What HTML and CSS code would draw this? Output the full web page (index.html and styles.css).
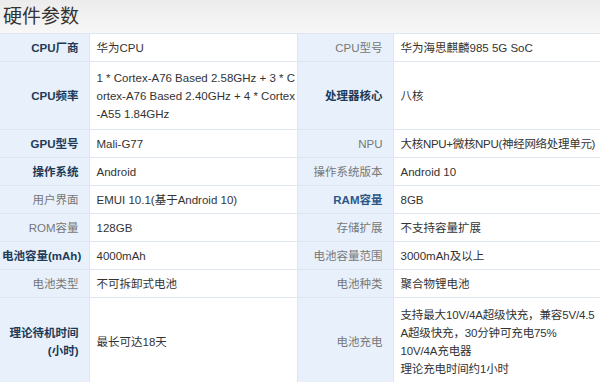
FILE: index.html
```html
<!DOCTYPE html>
<html lang="zh">
<head>
<meta charset="utf-8">
<link rel="stylesheet" href="styles.css">
</head>
<body>
<div class="page">
  <div class="head"><h1 class="title">硬件参数</h1></div>
  <table class="spec">
    <colgroup><col class="c1"><col class="c2"><col class="c3"><col class="c4"></colgroup>
    <tr class="row">
      <th class="lab strong">CPU厂商</th><td class="val">华为CPU</td>
      <th class="lab">CPU型号</th><td class="val">华为海思麒麟985 5G SoC</td>
    </tr>
    <tr class="row tall">
      <th class="lab strong">CPU频率</th><td class="val lines">1 * Cortex-A76 Based 2.58GHz + 3 * C<br>ortex-A76 Based 2.40GHz + 4 * Cortex<br>-A55 1.84GHz</td>
      <th class="lab strong">处理器核心</th><td class="val">八核</td>
    </tr>
    <tr class="row">
      <th class="lab strong">GPU型号</th><td class="val">Mali-G77</td>
      <th class="lab">NPU</th><td class="val lines tight">大核NPU+微核NPU(神经网络处理单元)</td>
    </tr>
    <tr class="row">
      <th class="lab strong">操作系统</th><td class="val">Android</td>
      <th class="lab">操作系统版本</th><td class="val">Android 10</td>
    </tr>
    <tr class="row">
      <th class="lab">用户界面</th><td class="val">EMUI 10.1(基于Android 10)</td>
      <th class="lab strong blue">RAM容量</th><td class="val">8GB</td>
    </tr>
    <tr class="row">
      <th class="lab">ROM容量</th><td class="val">128GB</td>
      <th class="lab">存储扩展</th><td class="val">不支持容量扩展</td>
    </tr>
    <tr class="row">
      <th class="lab strong">电池容量(mAh)</th><td class="val">4000mAh</td>
      <th class="lab">电池容量范围</th><td class="val">3000mAh及以上</td>
    </tr>
    <tr class="row">
      <th class="lab">电池类型</th><td class="val">不可拆卸式电池</td>
      <th class="lab">电池种类</th><td class="val">聚合物锂电池</td>
    </tr>
    <tr class="row last">
      <th class="lab strong">理论待机时间<br>(小时)</th><td class="val">最长可达18天</td>
      <th class="lab">电池充电</th><td class="val lines slight">支持最大10V/4A超级快充，兼容5V/4.5<br>A超级快充，30分钟可充电75%<br>10V/4A充电器<br>理论充电时间约1小时</td>
    </tr>
  </table>
</div>
</body>
</html>
```
FILE: styles.css
```css
html, body {
  margin: 0;
  padding: 0;
  background: #ffffff;
}
.page {
  width: 600px;
  height: 382px;
  overflow: hidden;
  font-family: "Liberation Sans", "Noto Sans CJK SC", sans-serif;
}
.head {
  height: 33px;
  background: linear-gradient(#ececec, #f7f7f7);
  display: flex;
  align-items: center;
  padding-left: 3px;
}
.title {
  margin: 0;
  font-size: 19px;
  font-weight: normal;
  color: #333333;
  line-height: 1;
}
.spec {
  width: 600px;
  border-collapse: collapse;
  table-layout: fixed;
  font-size: 11.5px;
  line-height: 18px;
}
.c1 { width: 89px; }
.c2 { width: 208px; }
.c3 { width: 96px; }
.c4 { width: 207px; }
.spec th, .spec td {
  border: 1px solid #dde5ee;
  padding: 0 2px 0 7px;
  vertical-align: middle;
}
.row { height: 28px; }
.tall { height: 68px; }
.last { height: 88px; }
.lab {
  background: #e8f1fb;
  border-color: #f4f8fc #dde5ee;
  text-align: right;
  font-weight: normal;
  color: #777777;
  white-space: nowrap;
}
.spec .lab { padding-right: 10px; padding-left: 2px; }
.lab.strong {
  font-weight: bold;
  color: #213a57;
}
.lab.blue {
  color: #2b5688;
}
.val {
  background: #ffffff;
  color: #333333;
  text-align: left;
}
.lines {
  white-space: nowrap;
  overflow: hidden;
}
.tight { letter-spacing: -0.3px; }
.slight { letter-spacing: -0.15px; }
.spec tr:first-child th, .spec tr:first-child td {
  border-top-color: #dde5ee;
}
.spec th:first-child { border-left: none; }
.spec td:last-child { border-right: none; }
```
